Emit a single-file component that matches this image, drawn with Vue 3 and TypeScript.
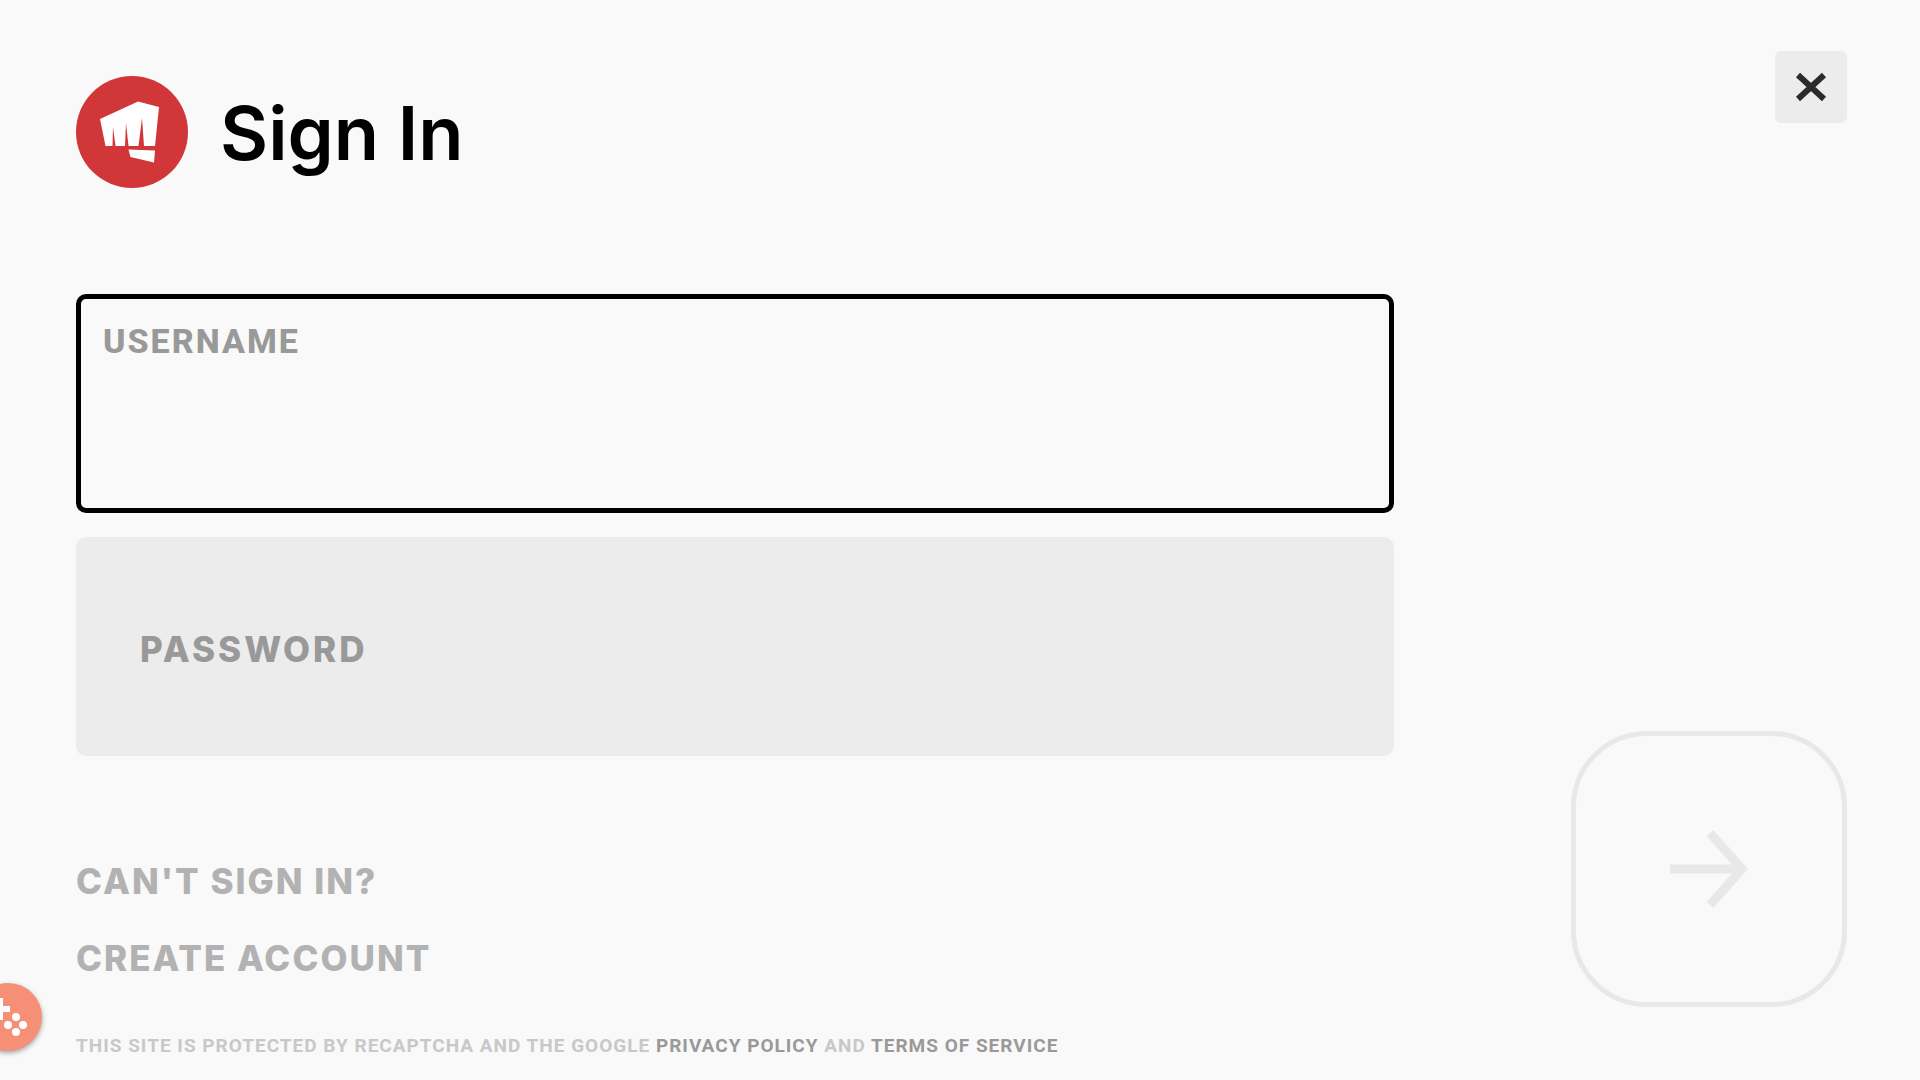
<script setup lang="ts">
import { ref } from 'vue'

const username = ref('')
const password = ref('')
</script>

<template>
  <main class="page">
    <header class="top">
      <div class="brand">
        <svg class="logo" viewBox="0 0 112 112" aria-hidden="true">
          <circle cx="56" cy="56" r="56" fill="#d13639" />
          <path
            fill="#fff"
            d="M24 43 62 25.500 83 31 79 70H68L66 42 62.500 70H52.500L50 47 49 70H39.500L37 51 36.500 70H29.500Z"
          />
          <path fill="#fff" d="M52.500 73.500 79 74.500 78 86.500 54.500 81Z" />
        </svg>
        <h1>Sign In</h1>
      </div>
      <button class="close" type="button" aria-label="Close">
        <svg viewBox="0 0 72 72" aria-hidden="true">
          <path d="M23 24 49 48M49 24 23 48" fill="none" stroke="#2b2b2b" stroke-width="6" />
        </svg>
      </button>
    </header>

    <form class="sign-in" @submit.prevent>
      <div class="column">
        <div class="fields">
          <div class="field active">
            <label for="username">USERNAME</label>
            <input id="username" v-model="username" type="text" autocomplete="username" />
          </div>
          <div class="field">
            <label for="password">PASSWORD</label>
            <input id="password" v-model="password" type="password" autocomplete="current-password" />
          </div>
        </div>
        <nav class="links">
          <a href="#recover">CAN'T SIGN IN?</a>
          <a href="#create">CREATE ACCOUNT</a>
        </nav>
      </div>
      <button class="submit" type="submit" aria-label="Sign in" disabled>
        <svg viewBox="0 0 80 80" aria-hidden="true">
          <path d="M1 40H72M41 4 73 40 41 76" fill="none" stroke="#e8e8e8" stroke-width="9" />
        </svg>
      </button>
    </form>

    <footer class="legal">
      THIS SITE IS PROTECTED BY RECAPTCHA AND THE GOOGLE
      <a href="#privacy">PRIVACY POLICY</a> AND <a href="#terms">TERMS OF SERVICE</a>
    </footer>

    <button class="game-badge" type="button" aria-label="Game tools">
      <svg viewBox="0 0 68 68" aria-hidden="true">
        <path fill="#fff" d="M24 15H29V23H36V29H29V37H24V29H17V23H24Z" />
        <circle cx="42" cy="34" r="4" fill="#fff" />
        <circle cx="34" cy="42" r="4" fill="#fff" />
        <circle cx="49" cy="42" r="4" fill="#fff" />
        <circle cx="42" cy="49" r="4" fill="#fff" />
      </svg>
    </button>
  </main>
</template>

<style>
body {
  margin: 0;
  background: #f9f9f9;
}
</style>

<style scoped>
.page {
  box-sizing: border-box;
  position: relative;
  display: flex;
  flex-direction: column;
  min-height: 100vh;
  padding: 51px 73px 0 76px;
  overflow: hidden;
  background: #f9f9f9;
  font-family: Roboto, "Liberation Sans", sans-serif;
}

button {
  padding: 0;
  border: 0;
  cursor: pointer;
}

a {
  text-decoration: none;
}

svg {
  display: block;
}

.top {
  display: flex;
  align-items: flex-start;
  justify-content: space-between;
}

.brand {
  display: flex;
  align-items: center;
  gap: 32px;
  padding-top: 25px;
}

.logo {
  width: 112px;
  height: 112px;
}

h1 {
  margin: 0;
  padding-top: 2px;
  color: #000;
  font-family: Inter, "Liberation Sans", sans-serif;
  font-size: 74px;
  font-weight: 600;
  line-height: 110px;
}

.close {
  width: 72px;
  height: 72px;
  border-radius: 6px;
  background: #ececec;
}

.sign-in {
  display: flex;
  align-items: flex-end;
  gap: 177px;
  margin-top: 106px;
}

.column {
  flex: 1;
  min-width: 0;
}

.fields {
  display: grid;
  gap: 24px;
}

.field {
  box-sizing: border-box;
  display: grid;
  height: 219px;
  border-radius: 10px;
  background: #ececec;
}

.field label,
.field input {
  grid-area: 1 / 1;
}

.field label {
  z-index: 1;
  align-self: center;
  justify-self: start;
  margin: 4px 0 0 64px;
  color: #999;
  font-family: Inter, "Liberation Sans", sans-serif;
  font-size: 35px;
  font-weight: 800;
  line-height: 40px;
  letter-spacing: 3px;
  pointer-events: none;
}

.field.active {
  border: 5px solid #000;
  background: #f9f9f9;
}

.field.active label {
  align-self: start;
  margin: 22px 0 0 22px;
  font-family: Roboto, "Liberation Sans", sans-serif;
  font-size: 34px;
  letter-spacing: 2px;
}

.field input {
  box-sizing: border-box;
  width: 100%;
  min-width: 0;
  padding: 64px 22px 0;
  border: 0;
  border-radius: 6px;
  outline: 0;
  background: transparent;
  color: #000;
  font: 700 36px Roboto, sans-serif;
}

.links {
  display: flex;
  flex-direction: column;
  align-items: flex-start;
  gap: 37px;
  margin-top: 105px;
}

.links a {
  color: #b2b2b2;
  font-family: Inter, "Liberation Sans", sans-serif;
  font-size: 35px;
  font-weight: 800;
  line-height: 40px;
  letter-spacing: 2px;
}

.submit {
  box-sizing: border-box;
  flex: none;
  display: grid;
  place-items: center;
  width: 276px;
  height: 276px;
  margin-bottom: -29px;
  border: 5px solid #e8e8e8;
  border-radius: 76px;
  background: transparent;
}

.submit svg {
  width: 80px;
  height: 80px;
}

.legal {
  margin-top: 54px;
  color: #c8c8c8;
  font-size: 19px;
  font-weight: 700;
  line-height: 28px;
  letter-spacing: 1px;
}

.legal a {
  color: #999;
}

.game-badge {
  position: absolute;
  bottom: 29px;
  left: -26px;
  width: 68px;
  height: 68px;
  border-radius: 50%;
  background: #f58f76;
  box-shadow: 0 2px 5px rgba(0, 0, 0, 0.35);
}
</style>
